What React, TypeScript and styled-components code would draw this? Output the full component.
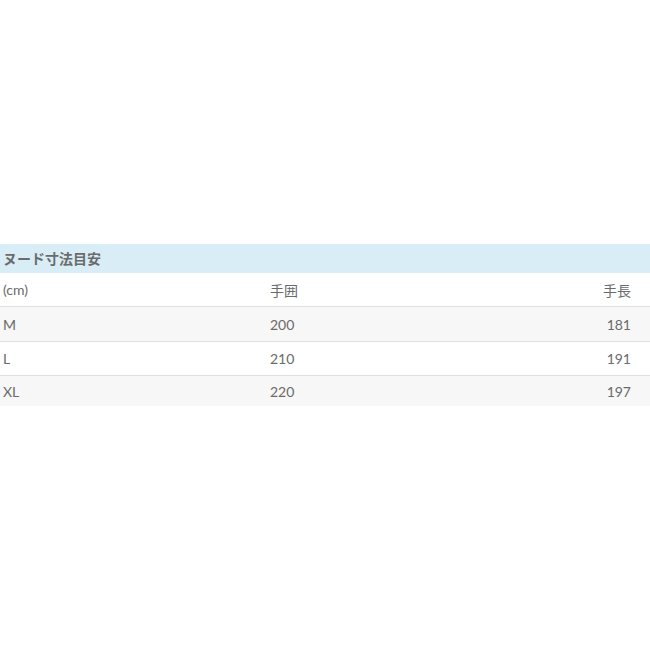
import React from "react";
import styled, { createGlobalStyle } from "styled-components";

const GlobalStyle = createGlobalStyle`
  html, body {
    margin: 0;
    padding: 0;
    background: #fff;
  }
  body {
    font-family: Lato, "Noto Sans CJK JP", sans-serif;
  }
`;

const Page = styled.div`
  min-height: 100vh;
  display: flex;
  align-items: center;
`;

const Table = styled.table`
  width: 100%;
  border-collapse: collapse;
  font-size: 14px;
  color: #6a6a6a;
`;

const Caption = styled.th`
  background: #d9edf7;
  height: 29px;
  padding: 0 3px;
  text-align: left;
  font-weight: 700;
  font-size: 14px;
  color: #6b6b6b;
`;

const Row = styled.tr<{ $shaded?: boolean }>`
  background: ${(p) => (p.$shaded ? "#f7f7f7" : "#fff")};
  & + & {
    border-top: 1px solid #dedede;
  }
  &:last-child td {
    height: 30px;
  }
`;

const Cell = styled.td<{ $align?: "left" | "right" }>`
  height: 33.5px;
  padding: 0 3px;
  text-align: ${(p) => p.$align || "left"};
  vertical-align: middle;
`;

const NameCell = styled(Cell)`
  width: 261px;
`;

const LastCell = styled(Cell)`
  padding-right: 19px;
`;

const rows = [
  { size: "(cm)", chest: "手囲", length: "手長" },
  { size: "M", chest: "200", length: "181" },
  { size: "L", chest: "210", length: "191" },
  { size: "XL", chest: "220", length: "197" },
];

export default function App() {
  return (
    <>
      <GlobalStyle />
      <Page>
        <Table>
          <thead>
            <tr>
              <Caption colSpan={3}>ヌード寸法目安</Caption>
            </tr>
          </thead>
          <tbody>
            {rows.map((r, i) => (
              <Row key={r.size} $shaded={i % 2 === 1}>
                <NameCell>{r.size}</NameCell>
                <Cell>{r.chest}</Cell>
                <LastCell $align="right">{r.length}</LastCell>
              </Row>
            ))}
          </tbody>
        </Table>
      </Page>
    </>
  );
}
